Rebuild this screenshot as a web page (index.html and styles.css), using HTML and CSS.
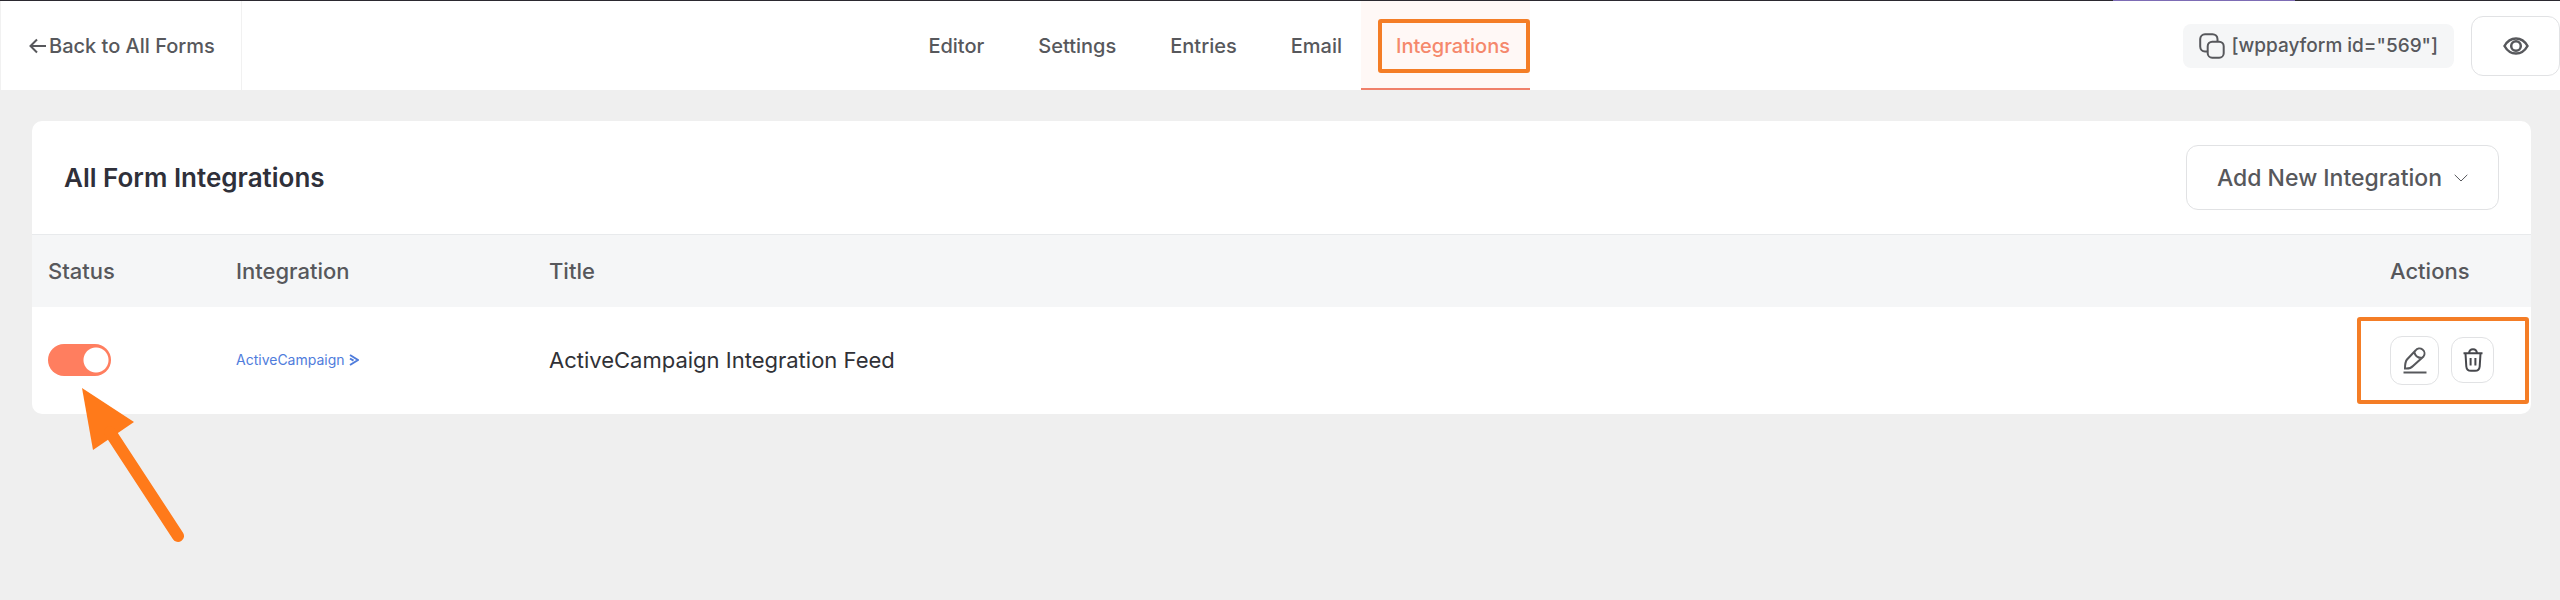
FILE: index.html
```html
<!DOCTYPE html>
<html lang="en">
<head>
<meta charset="utf-8">
<title>All Form Integrations</title>
<link rel="stylesheet" href="styles.css">
</head>
<body>
<header class="topbar">
  <a class="back" href="#"><svg class="back-arrow" viewBox="0 0 18 16" aria-hidden="true"><path d="M17 8H2M8 1.500 1.500 8 8 14.500"/></svg>Back to All Forms</a>
  <nav class="tabs">
    <a class="tab" href="#">Editor</a>
    <a class="tab" href="#">Settings</a>
    <a class="tab" href="#">Entries</a>
    <a class="tab" href="#">Email</a>
    <a class="tab tab-active" href="#" aria-current="page">Integrations<span class="mark mark-tab"></span></a>
  </nav>
  <div class="tools">
    <button class="shortcode" type="button">
      <svg class="icon-copy" viewBox="0 0 26 26" aria-hidden="true"><path d="M8.500 18.500H6A5 5 0 0 1 1.200 13.500V6A5 5 0 0 1 6 1.200h7.500A5 5 0 0 1 18.500 6v2.500"/><rect x="8.700" y="8.700" width="16" height="16" rx="4.500"/></svg>
      <span>[wppayform id="569"]</span>
    </button>
    <button class="preview" type="button" aria-label="Preview">
      <svg class="icon-eye" viewBox="0 0 26 18" aria-hidden="true"><path d="M1.500 9C4 4.500 8 1.500 13 1.500s9 3 11.500 7.500C22 13.500 18 16.500 13 16.500S4 13.500 1.500 9Z"/><circle cx="13" cy="9" r="4.800"/></svg>
    </button>
  </div>
</header>
<main class="page">
  <section class="card">
    <div class="card-head">
      <h1 class="card-title">All Form Integrations</h1>
      <button class="add" type="button">Add New Integration<svg class="icon-chevron" viewBox="0 0 14 8" aria-hidden="true"><path d="M.700.800 7 7 13.300.800"/></svg></button>
    </div>
    <table class="feeds">
      <thead>
        <tr><th class="col-status">Status</th><th class="col-integration">Integration</th><th>Title</th><th class="col-actions">Actions</th></tr>
      </thead>
      <tbody>
        <tr>
          <td class="cell-status">
            <input class="switch" type="checkbox" role="switch" checked aria-label="Feed status">
            <svg class="pointer" viewBox="0 0 104 152" aria-hidden="true"><path class="pointer-head" d="M0 0 52 34 11 62Z"/><path class="pointer-shaft" d="M28 44 96 148"/></svg>
          </td>
          <td><span class="brand">ActiveCampaign<svg class="brand-mark" viewBox="0 0 10 12" aria-hidden="true"><path d="M1 1 9 6 1 11M1 4.500 4.500 6.700"/></svg></span></td>
          <td class="cell-title">ActiveCampaign Integration Feed</td>
          <td class="cell-actions">
            <div class="actions">
              <button class="action action-edit" type="button" aria-label="Edit">
                <svg class="icon-edit" viewBox="0 0 24 27" aria-hidden="true"><path d="M12.500 3.500 4 12.500C2.600 14.200 2 17 2 21.500c4 .300 6.200-.500 8-2.500L20.500 9.500A5 5 0 0 0 12.500 3.500ZM11.300 5c.700 3.500 3.700 6 7.700 6"/><path d="M.500 25.500H23.500"/></svg>
              </button>
              <button class="action action-delete" type="button" aria-label="Delete">
                <svg class="icon-trash" viewBox="0 0 20 24" aria-hidden="true"><path d="M.500 5.200H19.500M6 5C6.300 2.200 7.500 1.200 10 1.200S13.700 2.200 14 5M2.500 5.500 3.300 18.500C3.600 21.800 5 22.800 8 22.800h4c3 0 4.400-1 4.700-4.300l.800-13M7.600 10v7.500M12.400 10v7.500"/></svg>
              </button>
            </div>
            <span class="mark mark-actions"></span>
          </td>
        </tr>
      </tbody>
    </table>
  </section>
</main>
</body>
</html>
```
FILE: styles.css
```css
* {
  box-sizing: border-box;
}

body {
  margin: 0;
  min-height: 100vh;
  background: #efefef;
  color: #57585c;
  font-family: Inter, "Liberation Sans", sans-serif;
  font-size: 20px;
  line-height: 28px;
}

button {
  margin: 0;
  border: 1px solid #e1e2e4;
  background: #fff;
  color: inherit;
  font: inherit;
  font-weight: 500;
}

a {
  color: inherit;
  text-decoration: none;
}

svg {
  display: block;
  flex: none;
  fill: none;
  stroke: currentColor;
  stroke-width: 2;
}

.topbar {
  display: flex;
  justify-content: space-between;
  height: 90px;
  border-top: 1px solid;
  border-image: linear-gradient(90deg, #2b2930 82.500%, #7d6cb5 82.500% 89.600%, #2b2930 89.600%) 1;
  background: #fff;
  font-weight: 500;
}

.back {
  display: flex;
  align-items: center;
  gap: 2px;
  padding: 0 26px 0 28px;
  border: solid #f1f1f1;
  border-width: 0 1px;
}

.back-arrow {
  width: 18px;
  height: 16px;
}

.tabs {
  display: flex;
  gap: 1px;
  padding-right: 2px;
}

.tab {
  display: flex;
  align-items: center;
  padding: 0 18px 0 35px;
}

.tab-active {
  position: relative;
  padding-right: 20px;
  background: #fff8f6;
  box-shadow: inset 0 -2px #f0806a;
  color: #f5886c;
}

.mark {
  position: absolute;
  border: 4px solid #f47d26;
  border-radius: 3px;
  pointer-events: none;
}

.mark-tab {
  inset: 18px 0 17px 17px;
}

.tools {
  display: flex;
  align-items: center;
  gap: 17px;
}

.shortcode {
  display: flex;
  align-items: center;
  gap: 6px;
  height: 44px;
  padding: 0 16px;
  border: 0;
  border-radius: 8px;
  background: #f5f6f7;
  font-size: 19px;
}

.icon-copy {
  width: 26px;
  height: 26px;
}

.preview {
  display: flex;
  align-items: center;
  justify-content: center;
  width: 89px;
  height: 60px;
  border-radius: 12px;
}

.icon-eye {
  width: 26px;
  height: 18px;
  stroke-width: 2.500;
}

.page {
  min-height: calc(100vh - 90px);
  padding: 31px 29px 31px 32px;
}

.card {
  border-radius: 10px;
  background: #fff;
}

.card-head {
  display: flex;
  align-items: center;
  justify-content: space-between;
  padding: 24px 32px;
}

.card-title {
  margin: 0;
  color: #2f303a;
  font-size: 26px;
  font-weight: 600;
  line-height: 32px;
}

.add {
  display: flex;
  align-items: center;
  gap: 12px;
  height: 65px;
  padding: 0 30px;
  border-radius: 12px;
  font-size: 23px;
}

.icon-chevron {
  width: 14px;
  height: 8px;
  stroke-width: 1;
}

.feeds {
  width: 100%;
  border-collapse: collapse;
  table-layout: fixed;
  font-size: 22px;
  text-align: left;
}

.feeds th {
  height: 72px;
  padding: 0 16px;
  border-top: 1px solid #e8eaec;
  background: #f5f6f7;
  font-weight: 500;
}

.feeds td {
  height: 107px;
  padding: 0 16px;
}

.feeds .col-status {
  width: 188px;
}

.feeds .col-integration {
  width: 313px;
}

.feeds .col-actions {
  width: 157px;
}

.cell-status,
.cell-actions {
  position: relative;
}

.switch {
  display: block;
  width: 63px;
  height: 32px;
  margin: 0;
  appearance: none;
  border-radius: 16px;
  background: radial-gradient(circle at 48px 50%, #fff 12px, #ff7e5f 13px);
}

.pointer {
  position: absolute;
  top: 81px;
  left: 50px;
  width: 104px;
  height: 152px;
  overflow: visible;
  stroke: none;
}

.pointer-head {
  fill: #ff7a1a;
}

.pointer-shaft {
  stroke: #ff7a1a;
  stroke-width: 12;
  stroke-linecap: round;
}

.brand {
  display: flex;
  align-items: center;
  gap: 4px;
  color: #4f7cdc;
  font-size: 14px;
}

.brand-mark {
  width: 10px;
  height: 12px;
}

.cell-title {
  color: #303136;
}

.actions {
  display: flex;
  align-items: center;
  gap: 12px;
}

.action {
  display: flex;
  align-items: center;
  justify-content: center;
  padding: 0;
  border-radius: 12px;
}

.action-edit {
  width: 49px;
  height: 49px;
}

.action-delete {
  width: 43px;
  height: 46px;
  color: #46474c;
}

.icon-edit {
  width: 24px;
  height: 27px;
}

.icon-trash {
  width: 20px;
  height: 24px;
}

.mark-actions {
  inset: 10px 2px 10px -17px;
}
```
